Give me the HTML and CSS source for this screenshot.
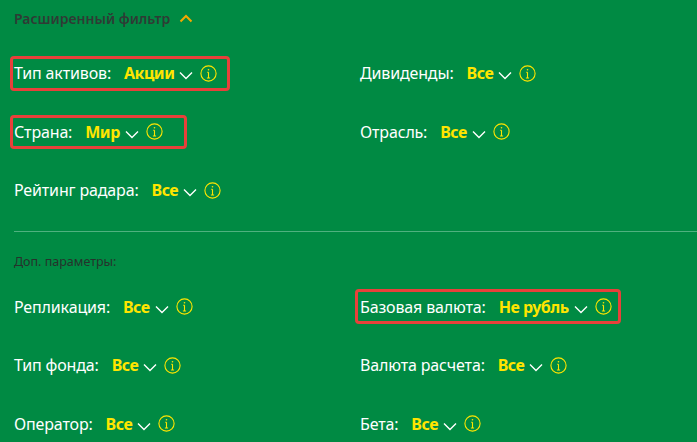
FILE: index.html
```html
<!DOCTYPE html>
<html lang="ru">
<head>
<meta charset="utf-8">
<title>Расширенный фильтр</title>
<link rel="stylesheet" href="styles.css">
</head>
<body>
<svg class="defs" width="0" height="0" aria-hidden="true">
  <symbol id="chev" viewBox="0 0 14 9"><path d="M1 1.500 7 7.500l6-6" fill="none" stroke="currentColor" stroke-width="1.400"/></symbol>
  <symbol id="info" viewBox="0 0 17 17"><circle cx="8.500" cy="8.500" r="7.600" fill="none" stroke="currentColor" stroke-width="1.100"/><path d="M8.500 7.200v5.600M6.900 13h3.200M7.200 7.300h1.300" fill="none" stroke="currentColor" stroke-width="1.100"/><circle cx="8.500" cy="4.800" r=".8" fill="currentColor"/></symbol>
</svg>
<main class="panel">
  <header class="head"><h2 class="title">Расширенный фильтр</h2><svg class="up" viewBox="0 0 14 9"><path d="M1.500 7.500 7 2l5.500 5.500" fill="none" stroke="currentColor" stroke-width="2"/></svg></header>
  <section class="grid grid-top">
    <div class="item mark mark-type"><span class="label">Тип активов:</span><b class="val">Акции</b><svg class="chev"><use href="#chev"/></svg><svg class="info"><use href="#info"/></svg></div>
    <div class="item"><span class="label">Дивиденды:</span><b class="val">Все</b><svg class="chev"><use href="#chev"/></svg><svg class="info"><use href="#info"/></svg></div>
    <div class="item mark mark-country"><span class="label">Страна:</span><b class="val">Мир</b><svg class="chev"><use href="#chev"/></svg><svg class="info"><use href="#info"/></svg></div>
    <div class="item"><span class="label">Отрасль:</span><b class="val">Все</b><svg class="chev"><use href="#chev"/></svg><svg class="info"><use href="#info"/></svg></div>
    <div class="item"><span class="label">Рейтинг радара:</span><b class="val">Все</b><svg class="chev"><use href="#chev"/></svg><svg class="info"><use href="#info"/></svg></div>
  </section>
  <hr class="rule">
  <p class="sub">Доп. параметры:</p>
  <section class="grid">
    <div class="item"><span class="label">Репликация:</span><b class="val">Все</b><svg class="chev"><use href="#chev"/></svg><svg class="info"><use href="#info"/></svg></div>
    <div class="item mark mark-currency"><span class="label">Базовая валюта:</span><b class="val">Не рубль</b><svg class="chev"><use href="#chev"/></svg><svg class="info"><use href="#info"/></svg></div>
    <div class="item"><span class="label">Тип фонда:</span><b class="val">Все</b><svg class="chev"><use href="#chev"/></svg><svg class="info"><use href="#info"/></svg></div>
    <div class="item"><span class="label">Валюта расчета:</span><b class="val">Все</b><svg class="chev"><use href="#chev"/></svg><svg class="info"><use href="#info"/></svg></div>
    <div class="item"><span class="label">Оператор:</span><b class="val">Все</b><svg class="chev"><use href="#chev"/></svg><svg class="info"><use href="#info"/></svg></div>
    <div class="item"><span class="label">Бета:</span><b class="val">Все</b><svg class="chev"><use href="#chev"/></svg><svg class="info"><use href="#info"/></svg></div>
  </section>
</main>
</body>
</html>
```

FILE: styles.css
```css
* { box-sizing: border-box; }
html, body { margin: 0; height: 100%; overflow: hidden; }
body { background: #008a43; font-family: "Noto Sans", "Open Sans", sans-serif; color: #fff; }
.defs { position: absolute; }
.panel { padding: 9px 0 0 14px; }
.head { display: flex; align-items: center; height: 18px; gap: 9px; }
.title { margin: 0; font-size: 14px; font-weight: 600; color: #2f3b35; }
.up { width: 14px; height: 9px; color: #f5a800; }
.grid { display: grid; grid-template-columns: 346px 1fr; grid-auto-rows: 58.500px; }
.grid-top { margin-top: 17px; }
.item { display: flex; align-items: center; height: 58.500px; position: relative; width: max-content; }
.label { font-size: 16px; letter-spacing: -.15px; margin-right: 13px; }
.val { font-size: 16px; letter-spacing: -.5px; color: #ffe500; }
.chev { width: 14px; height: 9px; margin: 5px 0 0 5px; color: #fff; }
.info { width: 17px; height: 17px; margin-left: 7px; color: #ffe500; }
.mark::after { content: ""; position: absolute; left: -4px; top: 12px; bottom: 12px; border: 3px solid #e8403a; border-radius: 4px; }
.mark-type::after { right: -13px; }
.mark-country::after { right: -24px; }
.mark-currency::after { left: -5px; right: -9px; top: 11px; }
.rule { height: 1px; border: 0; margin: 11px 0 0; background: #4fb17f; }
.sub { margin: 23px 0 0; height: 14px; line-height: 14px; font-size: 12.500px; color: #26322c; }
.sub + .grid { margin-top: 9px; }
```
